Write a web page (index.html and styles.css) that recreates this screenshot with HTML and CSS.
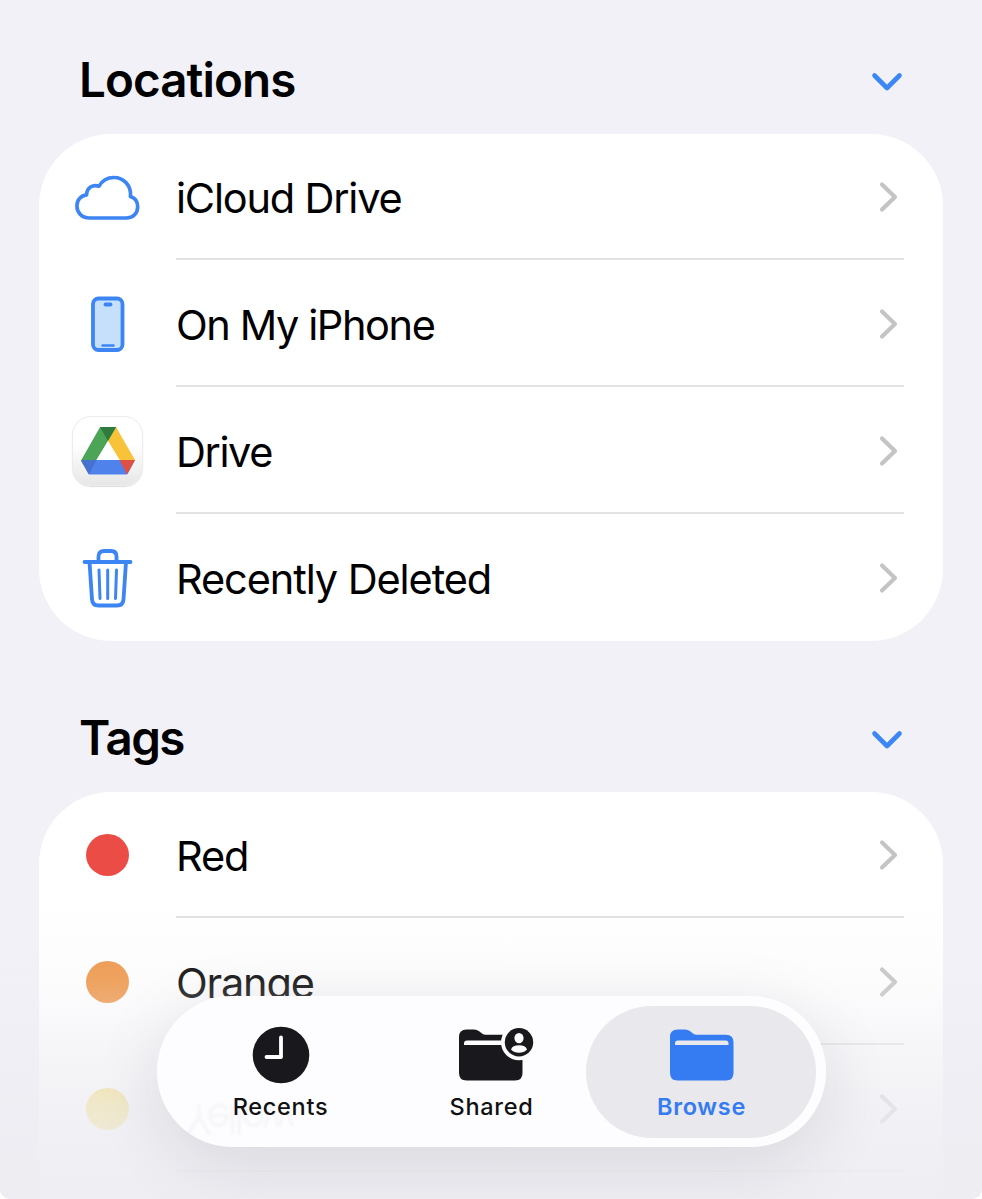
FILE: index.html
```html
<!DOCTYPE html>
<html lang="en">
<head>
<meta charset="utf-8">
<title>Browse</title>
<link rel="stylesheet" href="styles.css">
</head>
<body>
<svg class="defs" width="0" height="0" aria-hidden="true">
  <symbol id="chevron" viewBox="0 0 22 34"><path d="M4 4.500 L17 17 L4 29.500"/></symbol>
  <symbol id="down" viewBox="0 0 34 22"><path d="M4.500 4.500 L17 17 L29.500 4.500"/></symbol>
  <symbol id="folder" viewBox="0 0 64 52">
    <path d="M0 8 Q0 .5 7.500 .5 H15 Q18 .5 20.500 2.600 L23 4.600 Q24.500 5.800 27 5.800 H56 Q63.500 5.800 63.500 13.300 V44 Q63.500 51.500 56 51.500 H7.500 Q0 51.500 0 44 Z M5 16 H58.500 V14.500 Q58.500 11.500 55.500 11.500 H8 Q5 11.500 5 14.500 Z" fill-rule="evenodd"/>
  </symbol>
</svg>
<main class="screen">
  <header class="section-head section-head--first">
    <h2 class="title title--locations">Locations</h2>
    <svg class="toggle"><use href="#down"/></svg>
  </header>
  <ul class="card">
    <li class="row">
      <span class="icon icon--cloud"><svg class="line" width="66" height="47" viewBox="0 0 68 50" preserveAspectRatio="none"><path d="M16 46.800 C7.500 46.800 3 40.500 3 33.800 C3 27.500 7.200 22.800 13 22.200 C13 14.500 19.500 10.800 25.800 13 C29 7 34.500 3.700 41 3.700 C51 3.700 59.200 12 58.200 24 C62.600 25.500 65.600 29.500 65.600 34.800 C65.600 41.800 61 46.800 54 46.800 Z"/></svg></span>
      <span class="label drive">iCloud Drive</span><svg class="go"><use href="#chevron"/></svg>
    </li>
    <li class="row">
      <span class="icon"><svg class="line" width="36" height="58" viewBox="0 0 36 58"><rect x="3" y="3.500" width="29.500" height="51.500" rx="5.500" fill="#c6e0fc"/><path d="M15.500 9.500 H20.500"/><path class="bar" d="M12.500 50.500 H23.500"/></svg></span>
      <span class="label iphone">On My iPhone</span><svg class="go"><use href="#chevron"/></svg>
    </li>
    <li class="row">
      <span class="icon"><span class="app"><svg width="54" height="48" viewBox="0 0 54 48">
        <path d="M20 0 H34 Q35 0 35.500 1 L27 14 L15.500 33 L8 47 L.6 35 Q0 34 .6 32.500 L18.500 1 Q19 0 20 0 Z" fill="#4ca557"/>
        <path d="M35 0 L54 33 L46 47 L38.500 33 L27 14 Z" fill="#f8c338"/>
        <path d="M0 33 H54 L46.800 46.500 Q46.300 47.500 45 47.500 H9 Q7.700 47.500 7.200 46.500 Z" fill="#5082ec"/>
        <path d="M38.500 33 H54 L46 47.500 Z" fill="#dc5046"/>
        <path d="M0 33 H15.500 L8 47.500 Z" fill="#4771cf"/>
        <path d="M19 0 H35 L27 14 Z" fill="#2e7b3d"/>
        <path d="M27 14 L15.500 33 H38.500 Z" fill="#fff"/>
      </svg></span></span>
      <span class="label gdrive">Drive</span><svg class="go"><use href="#chevron"/></svg>
    </li>
    <li class="row">
      <span class="icon"><svg class="line trash" width="52" height="60" viewBox="0 0 52 60"><path d="M2.500 14 H48.500 M7.500 14 L10 51.500 Q10.500 57.500 16.500 57.500 H35 Q41 57.500 41.500 51.500 L44 14 M16.500 14 V8.500 Q16.500 3 22 3 H29 Q34.500 3 34.500 8.500 V14"/><path class="thin" d="M17 22 L18 50.500 M25.700 22 V50.500 M34.500 22 L33.500 50.500"/></svg></span>
      <span class="label deleted">Recently Deleted</span><svg class="go"><use href="#chevron"/></svg>
    </li>
  </ul>
  <header class="section-head">
    <h2 class="title title--tags">Tags</h2>
    <svg class="toggle"><use href="#down"/></svg>
  </header>
  <ul class="card">
    <li class="row"><span class="icon"><i class="dot red"></i></span><span class="label">Red</span><svg class="go"><use href="#chevron"/></svg></li>
    <li class="row"><span class="icon"><i class="dot orange"></i></span><span class="label">Orange</span><svg class="go"><use href="#chevron"/></svg></li>
    <li class="row"><span class="icon"><i class="dot yellow"></i></span><span class="label"></span><svg class="go"><use href="#chevron"/></svg></li>
    <li class="row"></li>
  </ul>
  <div class="fade"></div>
  <nav class="tabbar">
    <span class="reflection" aria-hidden="true">Yellow</span>
    <a class="tab tab--recents"><svg width="76" height="58" viewBox="0 0 76 58"><circle cx="38" cy="29" r="28.300"/><path d="M38 11.500 V31 H23.500" fill="none" stroke="#fff" stroke-width="3.800" stroke-linecap="round" stroke-linejoin="round"/></svg><span class="tab-label">Recents</span></a>
    <a class="tab tab--shared"><svg width="76" height="58" viewBox="0 0 76 58"><use href="#folder" x="5" y="3" width="64" height="52"/><circle cx="65" cy="16.300" r="18" fill="#fdfdff"/><circle cx="65" cy="16.300" r="14.200"/><ellipse cx="65" cy="12.100" rx="4.600" ry="5.200" fill="#fdfdff"/><path d="M57 23.500 Q58.500 19.300 65 19.300 Q71.500 19.300 73 23.500 Q70 26.800 65 26.800 Q60 26.800 57 23.500" fill="#fdfdff"/></svg><span class="tab-label">Shared</span></a>
    <a class="tab tab--active"><svg width="76" height="58" viewBox="0 0 76 58"><use href="#folder" x="6" y="3" width="64" height="52"/></svg><span class="tab-label">Browse</span></a>
  </nav>
</main>
</body>
</html>
```
FILE: styles.css
```css
* { box-sizing: border-box; }
html { background: #fff; }
body { margin: 0; font-family: Inter, "Liberation Sans", sans-serif; color: #000; }
.defs { position: absolute; }
.screen {
  position: relative;
  width: 982px;
  height: 1199px;
  overflow: hidden;
  padding: 0 39px;
  background: #f2f1f8;
  border-radius: 0 0 10px 10px;
}
.section-head {
  display: flex;
  align-items: center;
  justify-content: space-between;
  height: 151px;
  padding: 47px 39px 0 40px;
}
.section-head--first { height: 134px; padding-top: 30px; }
.title { margin: 0; font-size: 47.5px; line-height: 58px; font-weight: 600; letter-spacing: -0.9px; }
.title--tags { letter-spacing: -1.5px; }
.section-head .title { margin-top: -4px; }
.toggle { width: 34px; height: 22px; fill: none; stroke: #3b87f5; stroke-width: 4.6px; stroke-linecap: round; stroke-linejoin: round; }
.card { list-style: none; margin: 0; padding: 0; background: #fff; border-radius: 72px; height: 507px; }
.row { position: relative; display: flex; align-items: center; height: 127px; padding: 0 43px 2px 0; }
.row:not(:last-child)::after { content: ""; position: absolute; left: 137px; right: 39px; bottom: 1px; height: 2px; background: #e2e2e4; }
.icon { width: 137px; display: flex; justify-content: center; align-items: center; }
.icon--cloud { padding: 1px 2px 0 0; }
.label { flex: 1; font-size: 41.5px; line-height: 52px; letter-spacing: -1.2px; padding-top: 2px; }
.iphone { letter-spacing: -1.4px; }
.gdrive { letter-spacing: -1.4px; }
.deleted { letter-spacing: -1.1px; }
.go { width: 22px; height: 34px; fill: none; stroke: #c4c4c6; stroke-width: 4.2px; stroke-linecap: round; stroke-linejoin: round; }
.line { fill: none; stroke: #3d85f2; stroke-width: 3.8px; stroke-linecap: round; stroke-linejoin: round; }
.thin { stroke-width: 3px; }
.bar { stroke-width: 2.4px; }
.app { display: flex; justify-content: center; align-items: center; width: 71px; height: 70px; border-radius: 19px; background: linear-gradient(#fff 40%, #e7e7e8); border: 1px solid #ececee; box-shadow: 0 1px 1px #dcdcde; }
.dot { width: 43px; height: 42px; border-radius: 50%; }
.red { background: #eb4d46; }
.orange { background: #ee9443; }
.yellow { background: #f4d84a; }
.fade {
  position: absolute;
  inset: 900px 0 0;
  background: linear-gradient(rgba(238,237,242,0), rgba(238,237,242,.16) 27%, rgba(238,237,242,.5) 48%, rgba(238,237,242,.78) 70%, rgba(238,237,242,.96) 100%);
}
.tabbar {
  position: absolute;
  left: 156.5px;
  top: 996px;
  width: 669px;
  height: 151px;
  padding: 10px 10px 9px;
  display: grid;
  grid-template-columns: 229px 1fr 230px;
  border-radius: 76px;
  background: #fdfdff;
  overflow: hidden;
}
.fade::after {
  content: "";
  position: absolute;
  left: 157px;
  top: 96px;
  width: 669px;
  height: 151px;
  border-radius: 76px;
  box-shadow: 0 16px 70px rgba(30,30,45,.11);
}
.tab { display: flex; flex-direction: column; align-items: center; padding-top: 20px; border-radius: 66px; fill: #19191d; color: #111; }
.tab svg { overflow: visible; }
.tab--recents { padding-right: 1px; }
.tab--shared { padding-left: 2px; }
.tab--active { background: #e9e8ed; fill: #357bf1; color: #357bf1; padding-left: 2px; }
.tab-label { margin-top: 8px; font-size: 23.5px; line-height: 29px; font-weight: 500; letter-spacing: .7px; }
.tab--active .tab-label { font-weight: 600; }
.reflection { position: absolute; left: 28px; top: 97px; font-size: 42px; line-height: 52px; letter-spacing: -3.5px; color: rgba(60,60,80,.035); transform: scaleY(-1); filter: blur(.8px); }
```
